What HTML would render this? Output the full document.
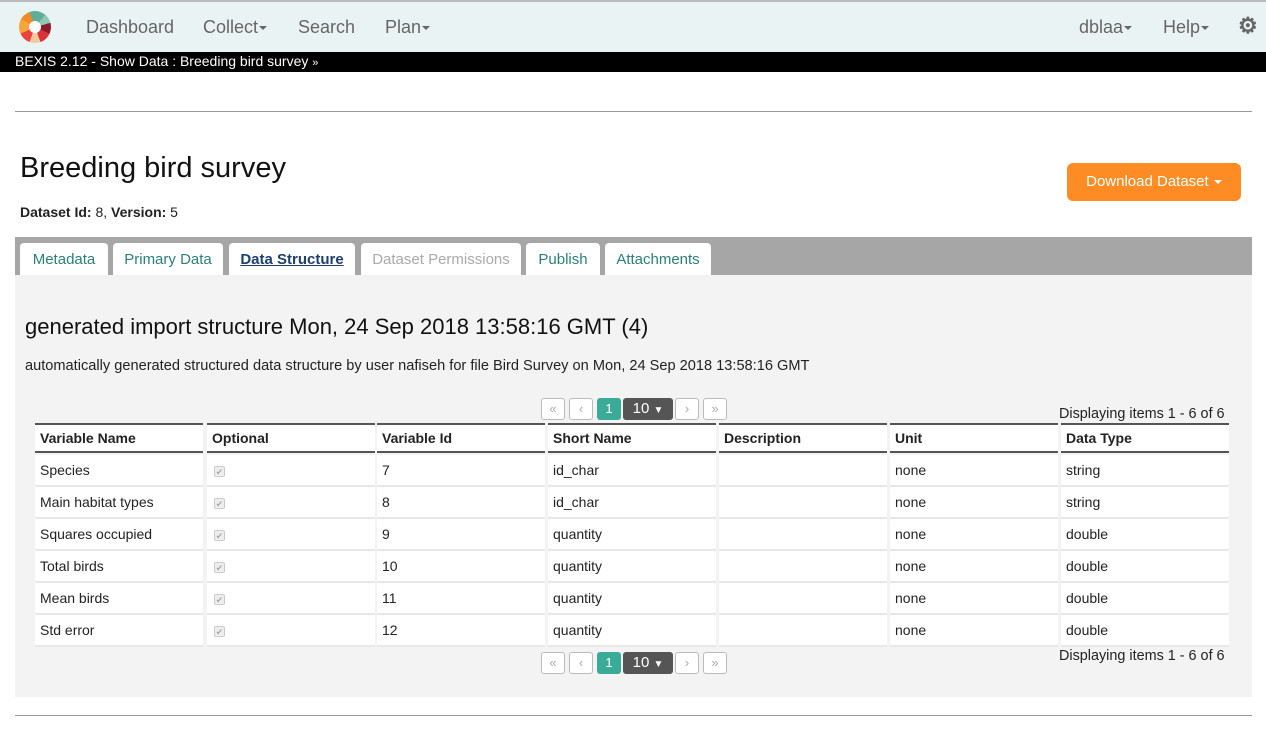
<!DOCTYPE html>
<html><head><meta charset="utf-8"><style>
*{box-sizing:border-box}
body{margin:0;width:1266px;height:730px;overflow:hidden;background:#fff;font-family:"Liberation Sans",Arial,sans-serif;color:#222;position:relative}
.a{position:absolute}
.nav{left:0;top:0;width:1266px;height:52px;background:#eaf3f3;border-top:2px solid #bbb}
.nav span{position:absolute;top:15px;font-size:18px;color:#666}
.car{display:inline-block;width:0;height:0;border-left:4px solid transparent;border-right:4px solid transparent;border-top:4px solid #666;vertical-align:middle;margin-left:1px}
.bar{left:0;top:52px;width:1266px;height:20px;background:#000;color:#fff;font-size:14px;padding:1px 0 0 15px}
.hr{height:1px;background:#999}
.tabs{left:15px;top:237px;width:1237px;height:38px;background:#a6a6a6}
.tab{position:absolute;top:6px;height:32px;background:#fff;border-radius:4px 4px 0 0;font-size:15px;color:#2a7f7a;text-align:center;padding-top:8px}
.panel{left:15px;top:275px;width:1237px;height:422px;background:#f3f3f3}
.cell{position:absolute;width:168px;font-size:14px;padding-left:5px}
.th{height:30px;border-top:2px solid #555;border-bottom:2px solid #555;font-weight:bold;padding-top:5px;background:#fff}
.td{height:32px;border-bottom:2px solid #e8e8e8;background:#fff;padding-top:7px}
.cb{display:inline-block;width:11px;height:11px;border:1px solid #ccc;border-radius:2px;background:#eee;color:#aaa;font-size:9px;line-height:10px;text-align:center;margin-left:2px}
.pb{position:absolute;height:22px;border:1px solid #bbb;border-radius:3px;background:#fff;color:#aaa;font-size:13px;text-align:center;line-height:20px}
</style></head><body>
<div class="a nav">
  <div class="a" style="left:19px;top:9px;width:32px;height:32px;border-radius:50%;background:conic-gradient(#5fae97 0 40deg,#8ec9b4 40deg 75deg,#8f1b2a 75deg 115deg,#d8323a 115deg 160deg,#f6c8a0 160deg 200deg,#e8443f 200deg 245deg,#f5a53a 245deg 300deg,#f08a2a 300deg 340deg,#5fae97 340deg)"></div>
  <div class="a" style="left:29px;top:19px;width:12px;height:12px;border-radius:50%;background:#fff"></div>
  <span style="left:86px">Dashboard</span>
  <span style="left:203px">Collect<i class="car"></i></span>
  <span style="left:298px">Search</span>
  <span style="left:385px">Plan<i class="car"></i></span>
  <span style="left:1079px">dblaa<i class="car"></i></span>
  <span style="left:1163px">Help<i class="car"></i></span>
  <span style="left:1238px;font-size:22px;top:11px;font-weight:bold;color:#666">⚙</span>
</div>
<div class="a bar">BEXIS 2.12 - Show Data : Breeding bird survey <span style="font-size:11px">»</span></div>
<div class="a hr" style="left:15px;top:111px;width:1237px"></div>
<div class="a" style="left:20px;top:152px;font-size:29px;color:#111">Breeding bird survey</div>
<div class="a" style="left:20px;top:204px;font-size:14px"><b>Dataset Id:</b> 8, <b>Version:</b> 5</div>
<div class="a" style="left:1067px;top:163px;width:174px;height:38px;background:#fd8c24;border-radius:6px;color:#fff;font-size:15px;text-align:center;padding-top:10px">Download Dataset <i class="car" style="border-top-color:#fff"></i></div>
<div class="a tabs">
  <div class="tab" style="left:5px;width:88px">Metadata</div>
  <div class="tab" style="left:98px;width:110px">Primary Data</div>
  <div class="tab" style="left:214px;width:126px;color:#1d3f6e;font-weight:bold;text-decoration:underline">Data Structure</div>
  <div class="tab" style="left:346px;width:160px;color:#aaa">Dataset Permissions</div>
  <div class="tab" style="left:511px;width:74px">Publish</div>
  <div class="tab" style="left:590px;width:106px">Attachments</div>
</div>
<div class="a panel"></div>
<div class="a" style="left:25px;top:314px;font-size:22px;color:#111">generated import structure Mon, 24 Sep 2018 13:58:16 GMT (4)</div>
<div class="a" style="left:25px;top:358px;font-size:14.6px">automatically generated structured data structure by user nafiseh for file Bird Survey on Mon, 24 Sep 2018 13:58:16 GMT</div>

<div class="pb" style="left:541px;top:398px;width:24px">«</div>
<div class="pb" style="left:569px;top:398px;width:24px">‹</div>
<div class="pb" style="left:597px;top:398px;width:24px;background:#3aab97;border-color:#3aab97;color:#fff">1</div>
<div class="pb" style="left:623px;top:398px;width:50px;background:#555;border-color:#555;color:#fff;font-size:15px">10 <span style="font-size:10px">▼</span></div>
<div class="pb" style="left:675px;top:398px;width:24px">›</div>
<div class="pb" style="left:703px;top:398px;width:24px">»</div>
<div class="a" style="left:1059px;top:406px;font-size:14.4px">Displaying items 1 - 6 of 6</div>

<div class="pb" style="left:541px;top:652px;width:24px">«</div>
<div class="pb" style="left:569px;top:652px;width:24px">‹</div>
<div class="pb" style="left:597px;top:652px;width:24px;background:#3aab97;border-color:#3aab97;color:#fff">1</div>
<div class="pb" style="left:623px;top:652px;width:50px;background:#555;border-color:#555;color:#fff;font-size:15px">10 <span style="font-size:10px">▼</span></div>
<div class="pb" style="left:675px;top:652px;width:24px">›</div>
<div class="pb" style="left:703px;top:652px;width:24px">»</div>
<div class="a" style="left:1059px;top:648px;font-size:14.4px">Displaying items 1 - 6 of 6</div>

<div id="t"></div>
<script>
var xs=[35,207,377,548,719,890,1061];
var hd=["Variable Name","Optional","Variable Id","Short Name","Description","Unit","Data Type"];
var rows=[["Species","7","id_char","string"],["Main habitat types","8","id_char","string"],["Squares occupied","9","quantity","double"],["Total birds","10","quantity","double"],["Mean birds","11","quantity","double"],["Std error","12","quantity","double"]];
var h="";
for(var i=0;i<7;i++)h+='<div class="cell th" style="left:'+xs[i]+'px;top:423px">'+hd[i]+'</div>';
for(var r=0;r<6;r++){var y=455+r*32;var v=[rows[r][0],'<span class="cb">✔</span>',rows[r][1],rows[r][2],'','none',rows[r][3]];
for(var i=0;i<7;i++)h+='<div class="cell td" style="left:'+xs[i]+'px;top:'+y+'px">'+v[i]+'</div>';}
document.getElementById("t").innerHTML=h;
</script>
<div class="a hr" style="left:15px;top:715px;width:1237px"></div>
</body></html>
